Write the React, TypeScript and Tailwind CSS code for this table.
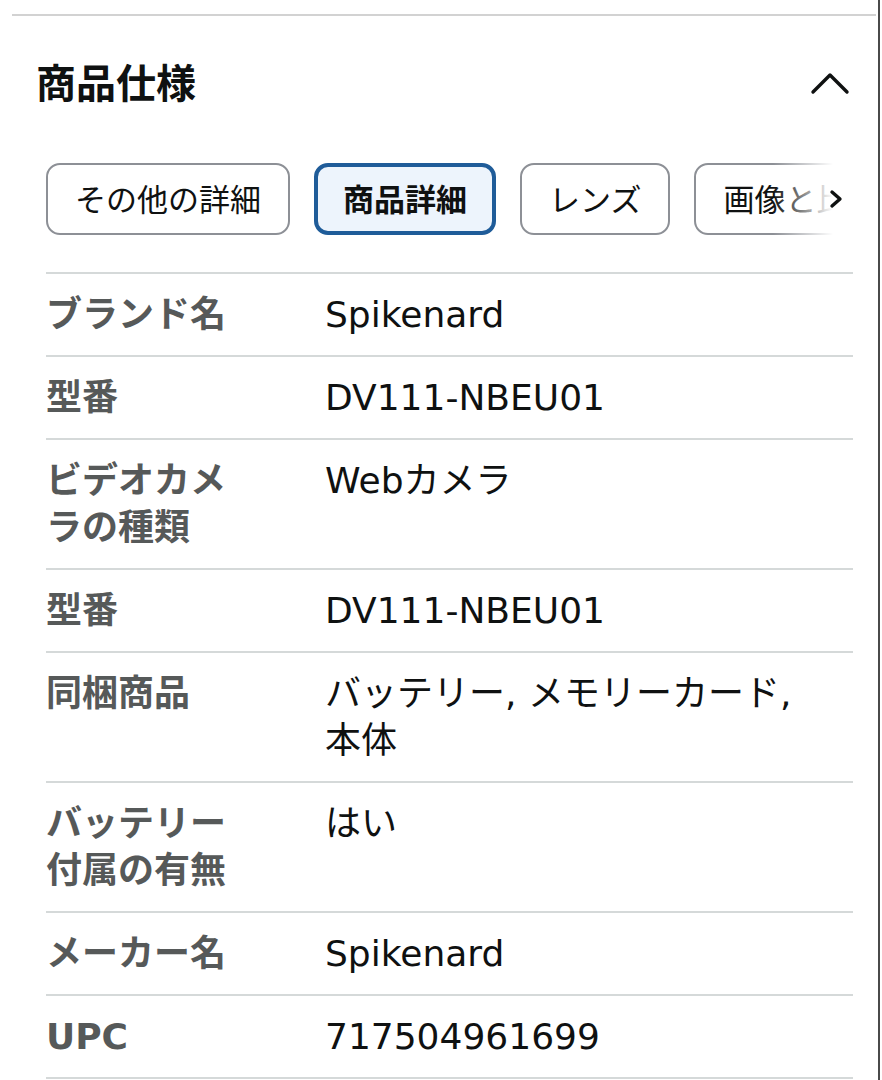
import React from 'react';

const specs: { label: string; value: string }[] = [
  { label: 'ブランド名', value: 'Spikenard' },
  { label: '型番', value: 'DV111-NBEU01' },
  { label: 'ビデオカメラの種類', value: 'Webカメラ' },
  { label: '型番', value: 'DV111-NBEU01' },
  { label: '同梱商品', value: 'バッテリー, メモリーカード, 本体' },
  { label: 'バッテリー付属の有無', value: 'はい' },
  { label: 'メーカー名', value: 'Spikenard' },
  { label: 'UPC', value: '717504961699' },
];

const tabs = ['その他の詳細', '商品詳細', 'レンズ', '画像と比較'];

const font = { fontFamily: '"Noto Sans", "Noto Sans CJK JP", sans-serif' };
// wider latin glyphs for the spec table
const tableFont = { fontFamily: '"DejaVu Sans", "Noto Sans CJK JP", sans-serif' };

function ChevronUp() {
  return (
    <svg width="40" height="24" viewBox="0 0 40 24" fill="none">
      <polyline points="3,21 20,4 37,21" stroke="#0f1111" strokeWidth="3.4" strokeLinecap="round" strokeLinejoin="round" />
    </svg>
  );
}

function ChevronRight() {
  return (
    <svg width="14" height="20" viewBox="0 0 14 20" fill="none">
      <polyline points="3,3 11,10 3,17" stroke="#0f1111" strokeWidth="3.4" strokeLinecap="round" strokeLinejoin="round" />
    </svg>
  );
}

export default function App() {
  return (
    <div className="flex min-h-screen bg-white" style={font}>
      <div className="w-[878px] pt-[14px]">
        <div className="ml-[12px] mr-[2px] h-[2px] bg-[#d2d2d2]" />

        <div className="flex items-center justify-between pl-[36px] pr-[28px] mt-[43px]">
          <h2 className="text-[40px] leading-[48px] font-bold text-[#0f1111]">商品仕様</h2>
          <ChevronUp />
        </div>

        <div className="relative ml-[46px] mr-[25px] mt-[56px] overflow-hidden">
          <div className="flex gap-[24px]">
            {tabs.map((t, i) =>
              i === 1 ? (
                <div
                  key={t}
                  className="shrink-0 h-[72px] flex items-center px-[25px] rounded-[14px] border-[4px] border-[#1f5c99] bg-[#edf4fc] text-[31px] font-bold text-[#0f1111]"
                >
                  {t}
                </div>
              ) : (
                <div
                  key={t}
                  className="shrink-0 h-[72px] flex items-center px-[27px] rounded-[14px] border-2 border-[#8d9096] bg-white text-[31px] text-[#0f1111]"
                >
                  {t}
                </div>
              )
            )}
          </div>
          <div className="absolute right-0 top-0 h-[72px] w-[80px] flex items-center justify-end bg-gradient-to-r from-white/0 to-white to-75%">
            <span className="mr-[10px]">
              <ChevronRight />
            </span>
          </div>
        </div>

        <div className="ml-[46px] mr-[25px] mt-[37px] border-t-2 border-[#d5d9d9]" style={tableFont}>
          {specs.map((s, i) => (
            <div key={i} className="flex border-b-2 border-[#d5d9d9] pt-[17px] pb-[17px] text-[36px] leading-[47px]">
              <div className="w-[279px] shrink-0 pr-[84px] font-bold text-[#565959]">{s.label}</div>
              <div className="flex-1 pr-[40px] text-[#0f1111]">{s.value}</div>
            </div>
          ))}
        </div>
      </div>
      <div className="w-[2px] bg-[#4a4a4a]" />
    </div>
  );
}
